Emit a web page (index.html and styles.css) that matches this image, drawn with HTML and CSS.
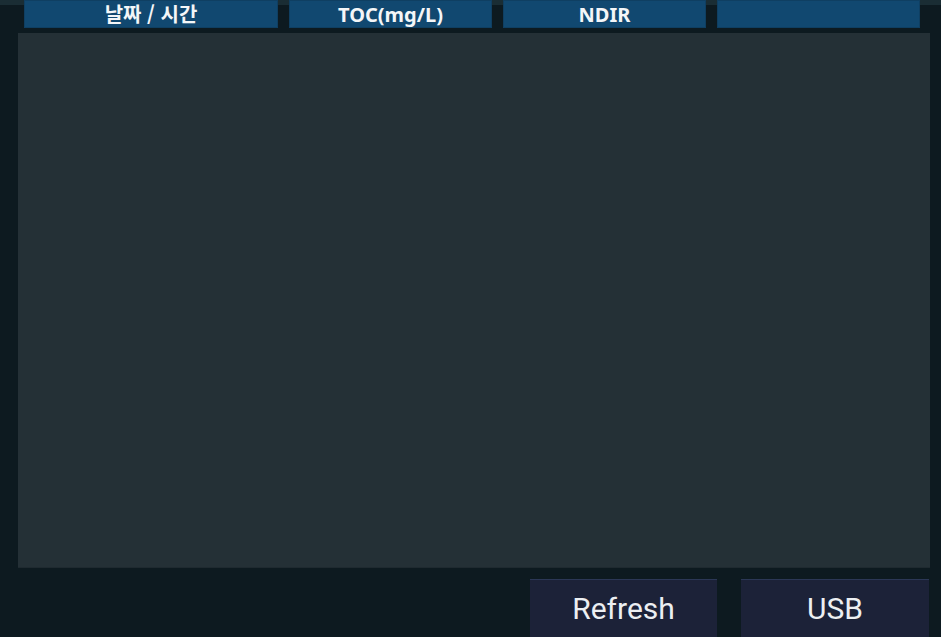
FILE: index.html
```html
<!DOCTYPE html>
<html lang="ko">
<head>
<meta charset="utf-8">
<link rel="stylesheet" href="styles.css">
</head>
<body>
<div class="screen">
  <div class="header">
    <div class="hcell wide">날짜 / 시간</div>
    <div class="hcell">TOC(mg/L)</div>
    <div class="hcell">NDIR</div>
    <div class="hcell"></div>
  </div>
  <div class="panel"></div>
  <div class="actions">
    <button class="btn refresh">Refresh</button>
    <button class="btn">USB</button>
  </div>
</div>
</body>
</html>
```
FILE: styles.css
```css
html, body {
  margin: 0;
  padding: 0;
  background: #0d1a20;
  overflow: hidden;
}
.screen {
  width: 941px;
  height: 637px;
  display: flex;
  flex-direction: column;
  background: linear-gradient(#1a2d34 0, #1a2d34 5px, #0d1a20 5px);
}
.header {
  display: grid;
  grid-template-columns: 254px 203px 203px 203px;
  column-gap: 11px;
  padding-left: 24px;
  height: 28px;
  flex: none;
}
.hcell {
  background: #114870;
  box-shadow: inset 0 0 0 1px #0f3f62;
  color: #f4f6f8;
  font-family: "Noto Sans", "Noto Sans CJK KR", sans-serif;
  font-weight: 700;
  font-size: 20px;
  line-height: 29px;
  text-align: center;
  height: 28px;
  overflow: hidden;
}
.hcell.wide {
  font-family: "Noto Sans CJK KR", "Noto Sans", sans-serif;
  line-height: 28px;
}
.panel {
  flex: none;
  margin: 5px 0 0 18px;
  width: 912px;
  height: 534px;
  background: #243036;
  box-shadow: 0 1px 0 #1f2a30;
}
.actions {
  flex: none;
  display: flex;
  justify-content: flex-end;
  gap: 24px;
  padding-right: 12px;
  margin-top: 12px;
}
.btn {
  width: 188px;
  height: 60px;
  background: #1c2238;
  border: none;
  border-top: 1px solid #2b3756;
  color: #eceff2;
  font-family: Roboto, "Noto Sans", sans-serif;
  font-size: 30px;
  padding: 0 0 2px;
}
.btn.refresh {
  width: 187px;
}
```
